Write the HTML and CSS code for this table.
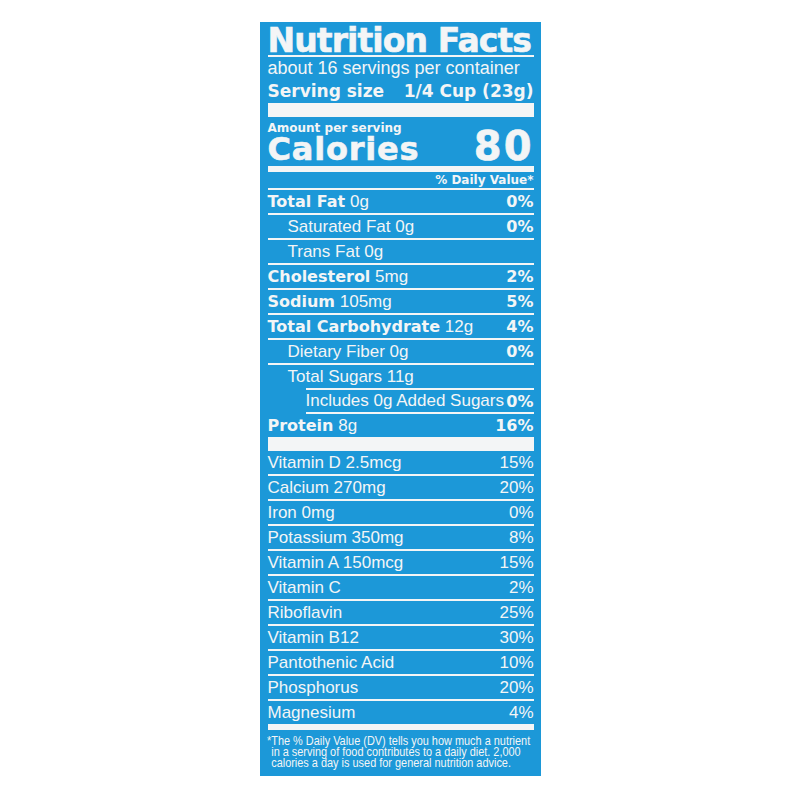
FILE: index.html
```html
<!DOCTYPE html>
<html lang="en">
<head>
    <meta charset="UTF-8">
    <meta name="viewport" content="width=device-width, initial-scale=1.0">
    <title>Nutrition Facts</title>
    <link rel="stylesheet" href="styles.css">
</head>
<body>
    <div class="label">
        <h1 class="title">Nutrition Facts</h1>
        <div class="servings">about 16 servings per container</div>
        <div class="serving-size">
            <span>Serving size</span>
            <span>1/4 Cup (23g)</span>
        </div>
        <div class="bar thick"></div>
        <div class="amount">Amount per serving</div>
        <div class="calories">
            <span>Calories</span>
            <span class="cal-num">80</span>
        </div>
        <div class="bar medium"></div>
        <div class="dv-head">% Daily Value*</div>

        <div class="row"><span><b>Total Fat</b> 0g</span><b>0%</b></div>
        <div class="row sub"><span>Saturated Fat 0g</span><b>0%</b></div>
        <div class="row sub"><span>Trans Fat 0g</span></div>
        <div class="row"><span><b>Cholesterol</b> 5mg</span><b>2%</b></div>
        <div class="row"><span><b>Sodium</b> 105mg</span><b>5%</b></div>
        <div class="row"><span><b>Total Carbohydrate</b> 12g</span><b>4%</b></div>
        <div class="row sub"><span>Dietary Fiber 0g</span><b>0%</b></div>
        <div class="row sub no-line"><span>Total Sugars 11g</span></div>
        <div class="row added"><span>Includes 0g Added Sugars</span><b>0%</b></div>
        <div class="row last"><span><b>Protein</b> 8g</span><b>16%</b></div>

        <div class="bar thick"></div>

        <div class="row vit"><span>Vitamin D 2.5mcg</span><span>15%</span></div>
        <div class="row vit"><span>Calcium 270mg</span><span>20%</span></div>
        <div class="row vit"><span>Iron 0mg</span><span>0%</span></div>
        <div class="row vit"><span>Potassium 350mg</span><span>8%</span></div>
        <div class="row vit"><span>Vitamin A 150mcg</span><span>15%</span></div>
        <div class="row vit"><span>Vitamin C</span><span>2%</span></div>
        <div class="row vit"><span>Riboflavin</span><span>25%</span></div>
        <div class="row vit"><span>Vitamin B12</span><span>30%</span></div>
        <div class="row vit"><span>Pantothenic Acid</span><span>10%</span></div>
        <div class="row vit"><span>Phosphorus</span><span>20%</span></div>
        <div class="row vit last"><span>Magnesium</span><span>4%</span></div>

        <div class="bar medium"></div>
        <div class="footnote-wrap">
            <p class="footnote">*The % Daily Value (DV) tells you how much a nutrient<br>in a serving of food contributes to a daily diet. 2,000<br>calories a day is used for general nutrition advice.</p>
        </div>
    </div>
</body>
</html>
```

FILE: styles.css
```css
body {
    margin: 0;
    background: #fff;
    font-family: 'Liberation Sans', Arial, sans-serif;
}
.label {
    width: 281px;
    box-sizing: border-box;
    margin: 22px auto 0;
    padding: 0 7px 0 8px;
    background: #1c98d8;
    color: #f3f5f6;
}
.label b,
.title,
.serving-size,
.amount,
.calories,
.dv-head {
    font-family: 'DejaVu Sans', sans-serif;
    font-weight: bold;
}
.title {
    margin: 0;
    font-size: 33px;
    letter-spacing: -0.9px;
    line-height: 38px;
    height: 33px;
    border-bottom: 2px solid #f3f5f6;
    white-space: nowrap;
    -webkit-text-stroke: 0.6px #f3f5f6;
}
.servings {
    font-size: 18px;
    line-height: 23px;
    height: 23px;
}
.serving-size {
    display: flex;
    justify-content: space-between;
    font-size: 17px;
    line-height: 22px;
    height: 23px;
}
.bar {
    background: #f3f5f6;
}
.bar.thick {
    height: 14px;
}
.bar.medium {
    height: 6px;
}
.amount {
    font-size: 12px;
    line-height: 16px;
    height: 16px;
    padding-top: 3px;
}
.calories {
    display: flex;
    justify-content: space-between;
    align-items: baseline;
    font-size: 32px;
    letter-spacing: 0.8px;
    line-height: 20px;
    height: 30px;
    -webkit-text-stroke: 0.6px #f3f5f6;
}
.cal-num {
    font-size: 40px;
    letter-spacing: 2px;
}
.dv-head {
    font-size: 12px;
    text-align: right;
    line-height: 16px;
    height: 16px;
    border-bottom: 2px solid #f3f5f6;
}
.row {
    display: flex;
    justify-content: space-between;
    align-items: center;
    height: 23px;
    font-size: 17px;
    border-bottom: 2px solid #f3f5f6;
    white-space: nowrap;
}
.row b {
    font-size: 16px;
}
.row.sub {
    padding-left: 20px;
}
.row.no-line {
    border-bottom: none;
}
.row.added {
    margin-left: 38px;
    border-top: 2px solid #f3f5f6;
    height: 22px;
}
.row.last {
    border-bottom: none;
}
.footnote-wrap {
    height: 46px;
}
.footnote {
    margin: 0 0 0 -1px;
    padding: 5px 0 0 5px;
    text-indent: -5px;
    font-size: 13px;
    line-height: 11px;
    white-space: nowrap;
    transform: scaleX(0.84);
    transform-origin: left top;
}
```
